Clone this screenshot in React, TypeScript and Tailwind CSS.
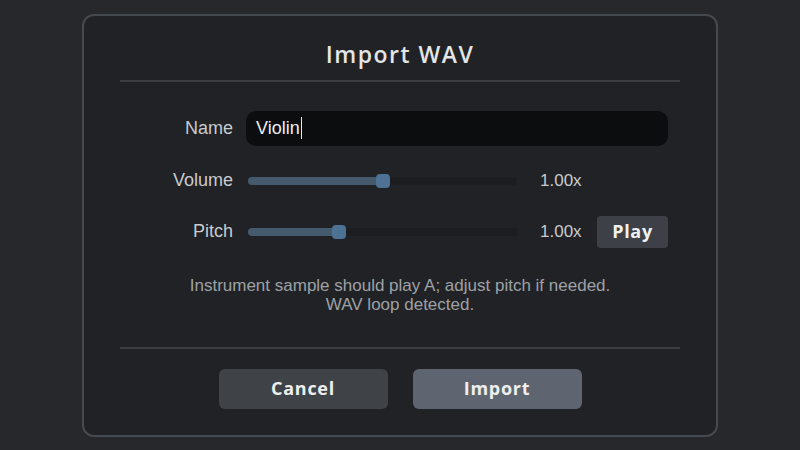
import React from 'react';

type SliderRowProps = {
  label: string;
  value: number;
  display: string;
  children?: React.ReactNode;
};

function SliderRow(props: SliderRowProps) {
  // track is 269px wide, thumb centred on the value
  const pct = props.value * 100;
  return (
    <div className="flex h-[32px] items-center">
      <span className="w-[113px] text-right text-[18px] text-[#c9cbce]">{props.label}</span>
      <div className="relative ml-[15px] h-[8px] w-[269px] rounded-full bg-[#1b1d20]">
        <div
          className="absolute left-0 top-0 h-full rounded-full bg-[#465a6d]"
          style={{ width: `${pct}%` }}
        />
        <div
          className="absolute top-1/2 h-[14px] w-[14px] -translate-x-1/2 -translate-y-1/2 rounded-[4px] bg-[#4e7294]"
          style={{ left: `${pct}%` }}
        />
      </div>
      <span className="ml-[23px] w-[41px] text-[17px] text-[#c9cbce]">{props.display}</span>
      {props.children}
    </div>
  );
}

export default function App() {
  return (
    <div
      className="flex h-screen w-full items-center justify-center bg-[#27282b]"
      style={{ fontFamily: '"Liberation Sans", Arial, sans-serif' }}
    >
      <div className="flex h-[423px] w-[636px] flex-col rounded-[12px] border-2 border-[#454950] bg-[#202225] px-[36px]">
        {/* Title */}
        <h1 className="mt-[24px] h-[28px] text-center font-['Open_Sans',sans-serif] text-[23px] font-semibold leading-[28px] tracking-[1.5px] text-[#e4e5e6]">
          Import WAV
        </h1>
        <div className="mt-[12px] h-[2px] bg-[#3a3d42]" />

        {/* Name */}
        <div className="mt-[29px] flex items-center">
          <label className="w-[113px] text-right text-[18px] text-[#c9cbce]">Name</label>
          <div className="ml-[13px] flex h-[35px] w-[422px] items-center rounded-[10px] bg-[#0c0d0f] pl-[10px] text-[18px] text-[#eceded]">
            Violin
            <span className="ml-[1px] h-[22px] w-[1px] bg-[#e6e6e6]" />
          </div>
        </div>

        {/* Sliders */}
        <div className="mt-[19px]">
          <SliderRow label="Volume" value={0.5} display="1.00x" />
        </div>
        <div className="mt-[19px]">
          <SliderRow label="Pitch" value={0.34} display="1.00x">
            <button className="ml-[16px] h-[32px] w-[71px] rounded-[4px] bg-[#3d4046] font-['Open_Sans',sans-serif] text-[18px] font-bold tracking-[0.7px] text-[#f0f0f0]">
              Play
            </button>
          </SliderRow>
        </div>

        {/* Info */}
        <div className="mt-[28px] text-center text-[17px] leading-[19px] text-[#9ea1a6]">
          <p>Instrument sample should play A; adjust pitch if needed.</p>
          <p>WAV loop detected.</p>
        </div>

        <div className="mt-[33px] h-[2px] bg-[#3a3d42]" />

        {/* Actions */}
        <div className="mt-[20px] flex justify-center gap-[25px]">
          <button className="h-[40px] w-[169px] rounded-[6px] bg-[#3f4247] font-['Open_Sans',sans-serif] text-[18px] font-bold tracking-[0.7px] text-[#eeeeee]">
            Cancel
          </button>
          <button className="h-[40px] w-[169px] rounded-[6px] bg-[#5e6470] font-['Open_Sans',sans-serif] text-[18px] font-bold tracking-[0.7px] text-[#eeeeee]">
            Import
          </button>
        </div>
      </div>
    </div>
  );
}
